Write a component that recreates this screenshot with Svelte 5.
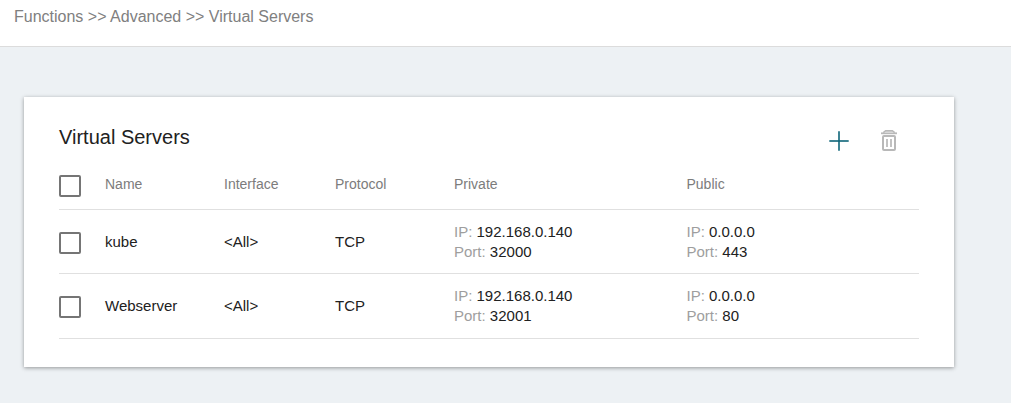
<script>
  const servers = [
    {
      name: 'kube',
      iface: '<All>',
      protocol: 'TCP',
      privateSide: { ip: '192.168.0.140', port: 32000 },
      publicSide: { ip: '0.0.0.0', port: 443 }
    },
    {
      name: 'Webserver',
      iface: '<All>',
      protocol: 'TCP',
      privateSide: { ip: '192.168.0.140', port: 32001 },
      publicSide: { ip: '0.0.0.0', port: 80 }
    }
  ];

  let selected = $state([false, false]);
  let allSelected = $derived(selected.every(Boolean));

  function toggleAll(event) {
    const checked = event.currentTarget.checked;
    selected = selected.map(() => checked);
  }
</script>

{#snippet endpoint(side)}
  <div><span class="key">IP:</span> {side.ip}</div>
  <div><span class="key">Port:</span> {side.port}</div>
{/snippet}

<header class="breadcrumb">Functions &gt;&gt; Advanced &gt;&gt; Virtual Servers</header>

<main>
  <section class="card">
    <div class="card-head">
      <h1>Virtual Servers</h1>
      <div class="actions">
        <button type="button" aria-label="Add">
          <svg width="24" height="24" viewBox="0 0 24 24" fill="none" stroke="#0d6478" stroke-opacity="0.8" stroke-width="2">
            <path d="M2.3 12H21.7" />
            <path d="M12 2.3V21.7" />
          </svg>
        </button>
        <button type="button" aria-label="Delete">
          <svg width="24" height="24" viewBox="0 0 24 24" fill="none" stroke="#b8b8b8">
            <path d="M4 4.3H20" stroke-width="1.8" />
            <path d="M6.3 3.6L8.6 1.7H15.4L17.7 3.6" fill="#dadada" stroke-width="1.4" />
            <rect x="6" y="7" width="12" height="14" rx="1" stroke-width="2" />
            <path d="M10 10V18M14 10V18" stroke-width="1.7" />
          </svg>
        </button>
      </div>
    </div>

    <table>
      <colgroup>
        <col class="c-check" />
        <col class="c-name" />
        <col class="c-iface" />
        <col class="c-protocol" />
        <col />
        <col />
      </colgroup>
      <thead>
        <tr>
          <th><input type="checkbox" aria-label="Select all" checked={allSelected} onchange={toggleAll} /></th>
          <th>Name</th>
          <th>Interface</th>
          <th>Protocol</th>
          <th>Private</th>
          <th>Public</th>
        </tr>
      </thead>
      <tbody>
        {#each servers as server, i}
          <tr>
            <td><input type="checkbox" aria-label={server.name} bind:checked={selected[i]} /></td>
            <td>{server.name}</td>
            <td>{server.iface}</td>
            <td>{server.protocol}</td>
            <td>{@render endpoint(server.privateSide)}</td>
            <td>{@render endpoint(server.publicSide)}</td>
          </tr>
        {/each}
      </tbody>
    </table>
  </section>
</main>

<style>
  :global(body) {
    background: #edf1f4;
    font-family: 'Liberation Sans', Arial, sans-serif;
    color: #212121;
  }

  .breadcrumb {
    padding: 7px 14px 19px;
    background: #fff;
    border-bottom: 1px solid #dcdcdc;
    color: #808080;
    font-size: 16px;
    line-height: 20px;
  }

  main {
    padding: 50px 57px 36px 24px;
  }

  .card {
    padding: 28px 35px;
    background: #fff;
    box-shadow: 0 1px 4px rgba(0, 0, 0, 0.38);
  }

  .card-head {
    display: flex;
    justify-content: space-between;
    height: 37px;
  }

  h1 {
    margin: 0;
    font-size: 20px;
    font-weight: 400;
    line-height: 24px;
  }

  .actions {
    display: flex;
    gap: 26px;
    padding: 4px 18px 0 0;
  }

  button {
    width: 24px;
    height: 24px;
    padding: 0;
    border: 0;
    background: none;
    cursor: pointer;
  }

  svg {
    display: block;
  }

  table {
    width: 100%;
    border-collapse: separate;
    border-spacing: 0;
    table-layout: fixed;
  }

  .c-check {
    width: 46px;
  }

  .c-name,
  .c-protocol {
    width: 119px;
  }

  .c-iface {
    width: 111px;
  }

  th,
  td {
    padding: 0;
    border-bottom: 1px solid #e0e0e0;
    text-align: left;
    vertical-align: middle;
    line-height: 20px;
  }

  th {
    height: 48px;
    padding-bottom: 4px;
    box-sizing: border-box;
    color: #7c7c7c;
    font-size: 14px;
    font-weight: 400;
  }

  td {
    padding: 12px 0 11px;
    font-size: 15px;
  }

  tbody tr:last-child td {
    padding-bottom: 12px;
  }

  .key {
    color: #9e9e9e;
  }

  input {
    appearance: none;
    display: block;
    box-sizing: border-box;
    width: 22px;
    height: 22px;
    margin: 2px 0 0;
    border: 2px solid #757575;
    border-radius: 2px;
    background: #fff;
  }

  thead input {
    margin-top: 4px;
  }

  input:checked {
    border-color: #0d6478;
    background: #0d6478;
    box-shadow: inset 0 0 0 3px #fff;
  }
</style>
